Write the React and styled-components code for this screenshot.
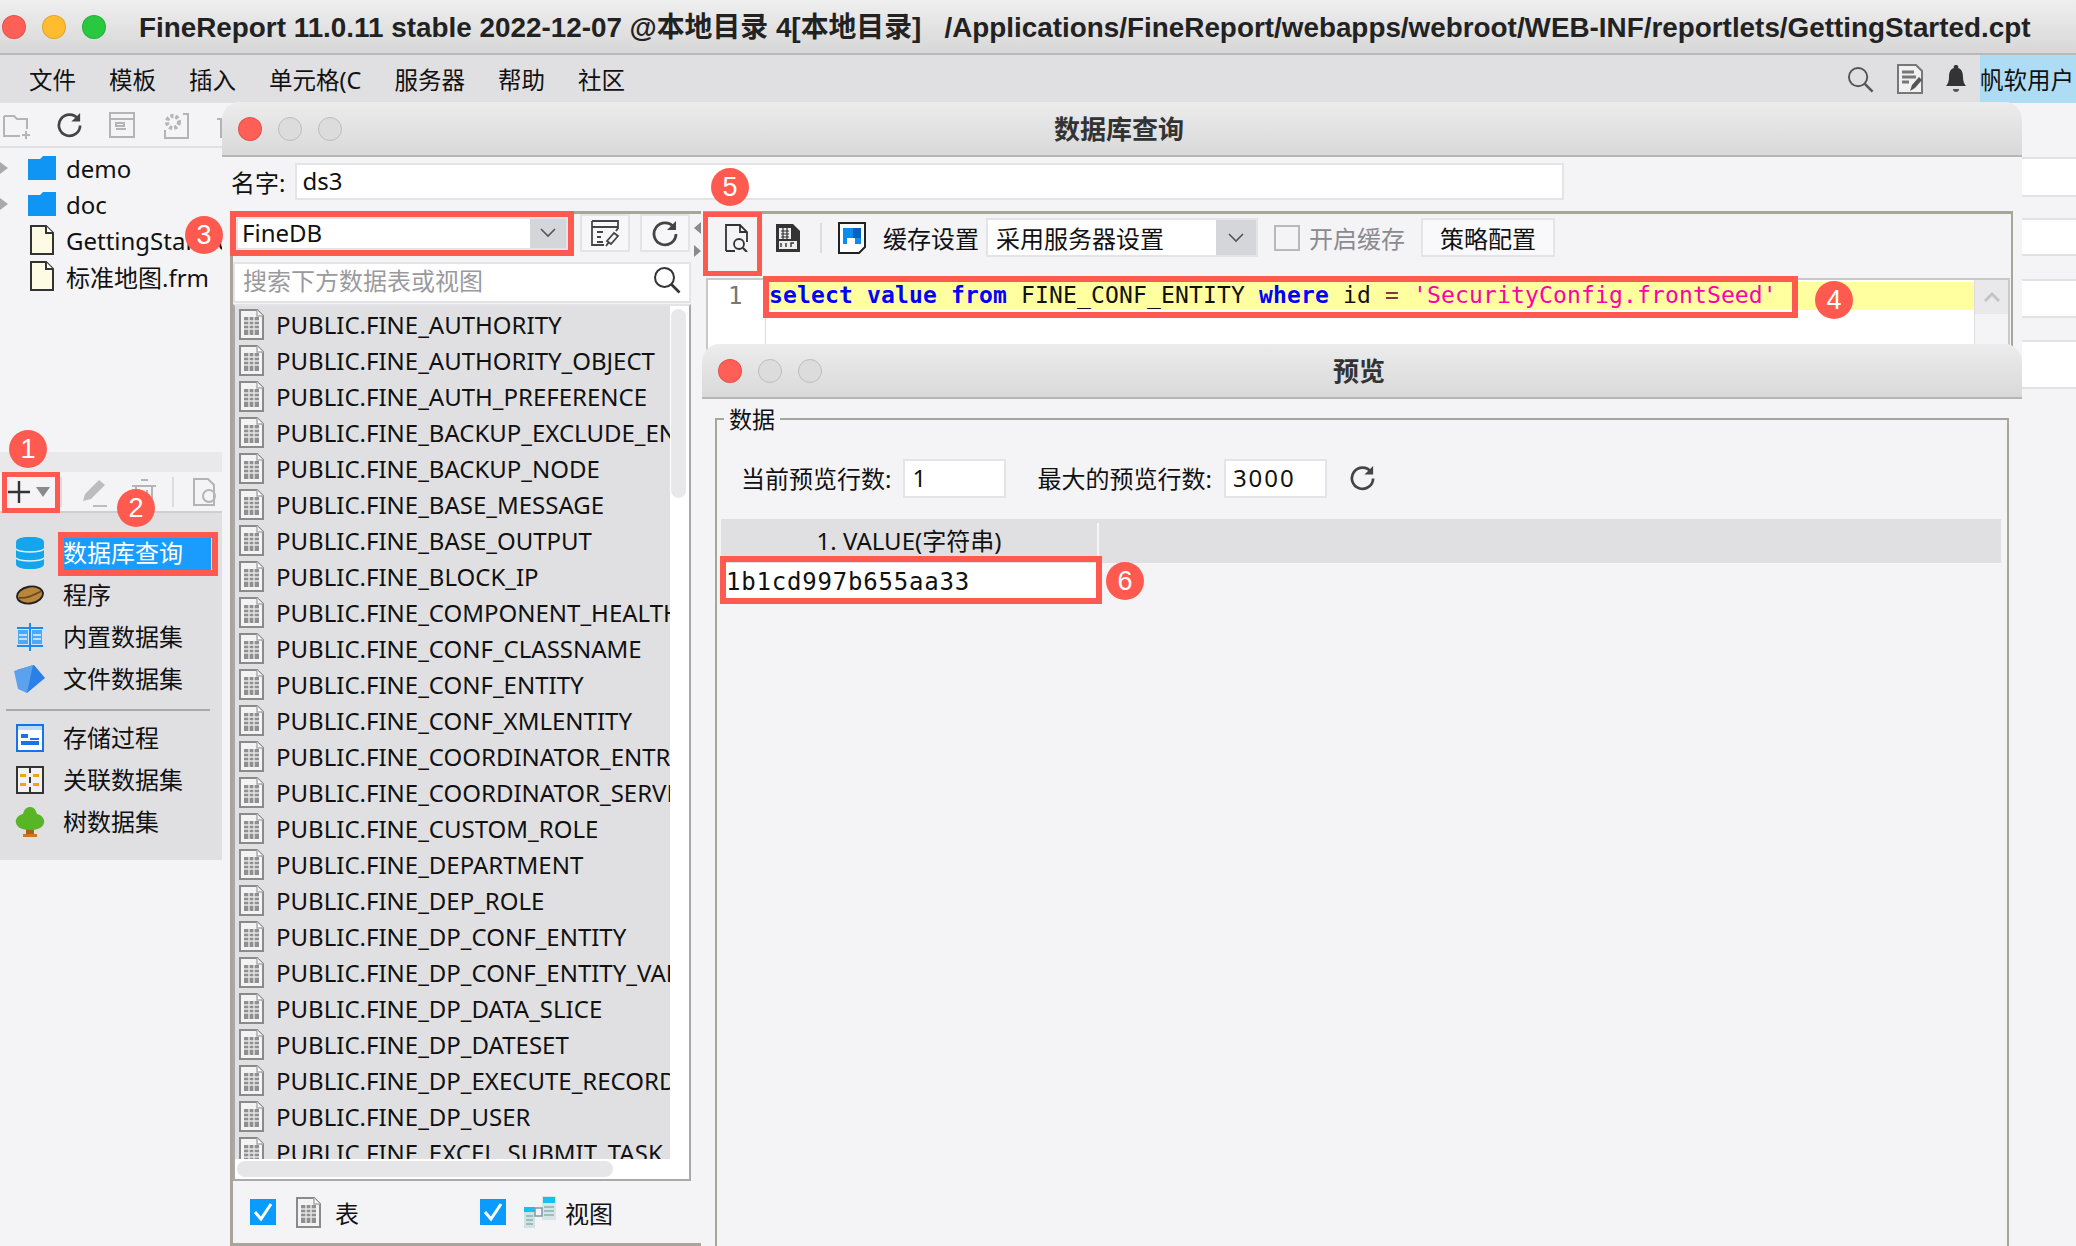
import React from 'react';
import styled, { createGlobalStyle } from 'styled-components';

const SANS = `"Noto Sans", "Noto Sans CJK SC", sans-serif`;
const MONO = `"DejaVu Sans Mono", "Noto Sans CJK SC", monospace`;
const RED = '#ff5a4f';

const Global = createGlobalStyle`
  html, body { margin: 0; padding: 0; background: #f4f4f6; }
  #root { width: 2076px; height: 1246px; overflow: hidden; }
  * { box-sizing: border-box; }
`;

const Screen = styled.div`
  position: relative;
  width: 2076px;
  height: 1246px;
  overflow: hidden;
  display: flex;
  flex-direction: column;
  background: #f4f4f6;
  font-family: ${SANS};
  font-size: 24px;
  color: #111;
`;

const AppTitle = styled.div`
  height: 55px;
  flex: none;
  display: flex;
  align-items: center;
  padding-left: 2px;
  background: linear-gradient(#efefef, #d7d7d7);
  border-bottom: 2px solid #b9b9b9;
`;

const Lights = styled.div`
  display: flex;
  gap: 16px;
  flex: none;
`;

const Light = styled.span`
  width: 24px;
  height: 24px;
  border-radius: 50%;
  background: ${p => p.$c};
  border: 1px solid ${p => p.$b || 'rgba(0,0,0,.12)'};
`;

const AppName = styled.div`
  margin: 0 0 3px 33px;
  font-family: "Liberation Sans", "Noto Sans CJK SC", sans-serif;
  font-weight: 700;
  font-size: 27.85px;
  white-space: pre;
  color: #222;
`;

const MenuBar = styled.div`
  height: 48px;
  flex: none;
  display: flex;
  align-items: center;
  padding-left: 29px;
  gap: 33px;
  background: #e0e0e3;
  font-size: 23.5px;
`;

const MenuRight = styled.div`
  margin-left: auto;
  height: 100%;
  display: flex;
  align-items: center;
  gap: 14px;
`;

const MenuIcons = styled.div`
  display: flex;
  align-items: center;
  gap: 22px;
`;

const UserTag = styled.div`
  height: 100%;
  width: 96px;
  background: #aedcf5;
  display: flex;
  align-items: center;
  white-space: nowrap;
`;

const Workspace = styled.div`
  flex: 1;
  display: flex;
  min-height: 0;
`;

const Sidebar = styled.div`
  width: 222px;
  flex: none;
  display: flex;
  flex-direction: column;
  background: #f4f4f6;
`;

const SideTools = styled.div`
  height: 45px;
  flex: none;
  display: flex;
  align-items: center;
  gap: 24px;
  padding-left: 2px;
  border-bottom: 2px solid #e0e0e3;
  overflow: hidden;
  svg { flex: none; }
`;

const Tree = styled.div`
  flex: 1;
  padding-top: 2px;
`;

const TreeRow = styled.div`
  position: relative;
  height: 36px;
  display: flex;
  align-items: center;
  gap: ${p => (p.$file ? 12 : 10)}px;
  padding-left: ${p => (p.$file ? 30 : 28)}px;
  white-space: nowrap;
  overflow: hidden;
  font-size: 24px;
  svg { flex: none; }
`;

const Expander = styled.span`
  position: absolute;
  left: 0;
  top: 12px;
  width: 0;
  height: 0;
  border-left: 8px solid #a9a9ad;
  border-top: 6px solid transparent;
  border-bottom: 6px solid transparent;
`;

const PanelGrip = styled.div`
  height: 20px;
  flex: none;
  background: #e9e9eb;
`;

const PanelTools = styled.div`
  height: 41px;
  flex: none;
  display: flex;
  align-items: center;
  padding-left: 8px;
  border-bottom: 2px solid #cfcfd2;
  svg { flex: none; }
`;

const ToolGap = styled.span`
  display: inline-flex;
  flex: none;
  margin-left: ${p => p.$l}px;
`;

const ToolSep = styled.span`
  width: 2px;
  height: 30px;
  flex: none;
  margin: 0 ${p => p.$r ?? 18}px 0 ${p => p.$l ?? 16}px;
  background: #dcdcdf;
`;

const DataTypes = styled.div`
  height: 347px;
  flex: none;
  padding-top: 19px;
  background: #e0e0e3;
`;

const DataType = styled.div`
  height: 42px;
  display: flex;
  align-items: center;
  padding-left: 16px;
  gap: 19px;
`;

const TypeIcon = styled.span`
  width: 28px;
  flex: none;
  display: flex;
  justify-content: center;
`;

const TypeLabel = styled.span`
  line-height: 34px;
  white-space: nowrap;
  ${p => p.$active && `
    width: 148px;
    color: #fff;
    background: #1a9cff;
  `}
`;

const TypeSep = styled.div`
  height: 2px;
  margin: 9px 12px 6px 6px;
  background: #a9a9ab;
`;

const SideBottom = styled.div`
  flex: none;
  height: 386px;
`;

const Strip = styled.div`
  flex: 1;
  display: flex;
  flex-direction: column;
  align-items: flex-end;
  padding-top: 54px;
`;

const StripRow = styled.div`
  width: 60px;
  height: ${p => p.$h}px;
  margin-bottom: ${p => p.$m}px;
  background: #fff;
  border-top: 2px solid #e2e2e6;
  border-bottom: 2px solid #e2e2e6;
`;

const Dialog = styled.div`
  position: absolute;
  left: ${p => p.$x}px;
  top: ${p => p.$y}px;
  width: ${p => p.$w}px;
  height: ${p => p.$h}px;
  display: flex;
  flex-direction: column;
  background: #f4f4f6;
  border-radius: 18px 18px 0 0;
  overflow: hidden;
`;

const DialogBar = styled.div`
  height: 55px;
  flex: none;
  display: grid;
  grid-template-columns: 1fr auto 1fr;
  align-items: center;
  padding: 0 22px 0 16px;
  background: linear-gradient(#ececec, #d9d9d9);
  border-bottom: 2px solid #b5b5b5;
`;

const DialogTitle = styled.div`
  margin-bottom: 2px;
  font-weight: 700;
  font-size: 26px;
  color: #333;
`;

const NameRow = styled.div`
  height: 37px;
  flex: none;
  margin-top: 6px;
  display: flex;
  align-items: center;
  padding-left: 9px;
  gap: 10px;
`;

const TextBox = styled.div`
  width: ${p => p.$w}px;
  height: ${p => p.$h || 37}px;
  flex: none;
  display: flex;
  align-items: center;
  padding: 0 0 2px ${p => p.$pl || 5}px;
  background: #fff;
  border: 2px solid #e4e4e8;
  letter-spacing: ${p => p.$sp || 0}px;
`;

const DialogBody = styled.div`
  flex: 1;
  display: flex;
  min-height: 0;
  margin: 11px 0 0 8px;
  gap: 2px;
`;

const SourcePane = styled.div`
  position: relative;
  width: 471px;
  flex: none;
  display: flex;
  flex-direction: column;
  padding: 0 10px 0 0;
  border: 3px solid #a8a69a;
  border-right: 0;
`;

const SourceRow = styled.div`
  height: 38px;
  flex: none;
  display: flex;
  align-items: center;
  padding-left: 3px;
`;

const Combo = styled.div`
  width: ${p => p.$w}px;
  height: ${p => p.$h || 33}px;
  flex: none;
  display: flex;
  background: #fff;
  border: 2px solid #e4e4e8;
`;

const ComboText = styled.div`
  flex: 1;
  padding: 0 0 1px ${p => p.$pl || 4}px;
  display: flex;
  align-items: center;
`;

const ComboArrow = styled.div`
  width: ${p => p.$w || 36}px;
  display: flex;
  align-items: center;
  justify-content: center;
  background: #d5d6da;
`;

const IconBtn = styled.div`
  width: 50px;
  height: 38px;
  flex: none;
  margin-left: ${p => p.$l}px;
  display: flex;
  align-items: center;
  justify-content: center;
  background: #f7f7f9;
  border: 2px solid #e4e4e8;
`;

const SearchBox = styled.div`
  height: 41px;
  flex: none;
  margin-top: 10px;
  display: flex;
  align-items: center;
  justify-content: space-between;
  padding: 0 8px 6px;
  background: #fff;
  border: 2px solid #e4e4e8;
  color: #9a9a9e;
`;

const TableList = styled.div`
  position: relative;
  height: 877px;
  flex: none;
  margin-top: 1px;
  display: flex;
  flex-direction: column;
  background: #fff;
  border: 2px solid #a9a9a9;
  border-top: 2px solid #e4e4e8;
`;

const ListViewport = styled.div`
  width: 435px;
  flex: 1;
  min-height: 0;
  overflow: hidden;
  background: #e0e0e3;
`;

const ListRow = styled.div`
  height: 36px;
  display: flex;
  align-items: center;
  gap: 12px;
  padding-left: 4px;
  white-space: nowrap;
  font-size: 24px;
`;

const VThumb = styled.div`
  position: absolute;
  right: 3px;
  top: 3px;
  width: 15px;
  height: 189px;
  border-radius: 8px;
  background: #e8e8ea;
`;

const HTrack = styled.div`
  height: 20px;
  flex: none;
  display: flex;
  align-items: center;
  padding-left: 2px;
  background: #fff;
`;

const HThumb = styled.div`
  width: 376px;
  height: 16px;
  border-radius: 8px;
  background: #e6e6e8;
`;

const FilterRow = styled.div`
  flex: 1;
  display: flex;
  align-items: center;
  padding-left: 17px;
`;

const Check = styled.span`
  width: 26px;
  height: 26px;
  flex: none;
  display: flex;
  align-items: center;
  justify-content: center;
  background: ${p => (p.$on ? '#0a9bff' : 'transparent')};
  border: ${p => (p.$on ? '0' : '2px solid #b9b9bd')};
`;

const FilterItem = styled.span`
  display: flex;
  flex: none;
  margin-left: ${p => p.$l}px;
`;

const Splitter = styled.span`
  position: absolute;
  right: 0;
  top: ${p => p.$t}px;
  width: 0;
  height: 0;
  border-top: 6px solid transparent;
  border-bottom: 6px solid transparent;
  ${p => (p.$left ? 'border-right: 7px solid #8b8b8b;' : 'border-left: 7px solid #8b8b8b;')}
`;

const SqlPane = styled.div`
  width: 1310px;
  flex: none;
  display: flex;
  flex-direction: column;
  border-top: 3px solid #a8a69a;
  border-right: 2px solid #a8a69a;
`;

const SqlTools = styled.div`
  height: 64px;
  flex: none;
  display: flex;
  align-items: flex-start;
  padding: 4px 0 0 22px;
`;

const ToolItem = styled.div`
  height: 39px;
  flex: none;
  display: flex;
  align-items: center;
  margin-left: ${p => p.$l || 0}px;
  color: ${p => p.$c || 'inherit'};
`;

const PlainBtn = styled.div`
  width: 134px;
  height: 39px;
  flex: none;
  margin-left: 16px;
  display: flex;
  align-items: center;
  justify-content: center;
  background: #f9f9fb;
  border: 2px solid #e4e4e8;
`;

const Editor = styled.div`
  flex: 1;
  display: flex;
  margin: 0 1px 0 3px;
  background: #fff;
  border: 2px solid #c9c9c9;
  font-family: ${MONO};
  font-size: 23px;
`;

const Gutter = styled.div`
  width: 58px;
  flex: none;
  padding: 2px 0 0 20px;
  color: #777;
  border-right: 1px solid #ddd;
  font-size: 24px;
`;

const CodeArea = styled.div`
  flex: 1;
  padding-top: 2px;
`;

const CodeLine = styled.div`
  height: 28px;
  line-height: 27px;
  padding-left: 3px;
  background: #ffff9f;
  white-space: pre;
  letter-spacing: 0.15px;
`;

const Kw = styled.b`color: #0000ff;`;
const Str = styled.span`color: #ff00a8;`;
const Op = styled.span`color: #7d3a3a;`;

const EditorScroll = styled.div`
  width: 34px;
  flex: none;
  background: #f4f4f6;
  border-left: 1px solid #ddd;
`;

const ScrollUp = styled.div`
  height: 34px;
  display: flex;
  align-items: center;
  justify-content: center;
  background: #e9e9eb;
`;

const DataGroup = styled.fieldset`
  flex: 1;
  margin: 4px 13px 0 13px;
  padding: 0 4px;
  min-width: 0;
  border: 2px solid #a8a69a;
  border-bottom: 0;
`;

const Legend = styled.legend`
  margin-left: 3px;
  padding: 0 5px;
  font-size: 23px;
  line-height: 32px;
`;

const PreviewRow = styled.div`
  height: 39px;
  margin-top: 24px;
  display: flex;
  align-items: center;
  padding-left: 20px;
`;

const RowLabel = styled.span`
  display: inline-flex;
  margin: 0 12px 3px ${p => p.$l || 0}px;
  white-space: nowrap;
`;

const GridHead = styled.div`
  height: 44px;
  margin: 21px 2px 0 0;
  display: flex;
  align-items: center;
  background: #e0e0e3;
`;

const HeadCell = styled.div`
  width: 378px;
  height: 36px;
  display: flex;
  align-items: center;
  justify-content: center;
  padding-bottom: 3px;
  border-right: 2px solid #f6f6f6;
`;

const GridCell = styled.div`
  width: 371px;
  height: 37px;
  margin-left: 5px;
  display: flex;
  align-items: center;
  background: #fff;
  font-family: ${MONO};
  font-size: 24px;
  letter-spacing: 0.8px;
`;

const RedBox = styled.div`
  position: absolute;
  left: ${p => p.$x}px;
  top: ${p => p.$y}px;
  width: ${p => p.$w}px;
  height: ${p => p.$h}px;
  border: ${p => p.$b || 5}px solid ${RED};
  pointer-events: none;
`;

const Badge = styled.div`
  position: absolute;
  left: ${p => p.$x - 19}px;
  top: ${p => p.$y - 19}px;
  width: 38px;
  height: 38px;
  border-radius: 50%;
  display: flex;
  align-items: center;
  justify-content: center;
  background: ${RED};
  color: #fff;
  font-family: "Liberation Sans", sans-serif;
  font-size: 27px;
`;

const Refresh = ({ s = 28, c = '#444' }) => (
  <svg width={s} height={s} viewBox="0 0 28 28" fill="none">
    <path d="M23 8.5A11 11 0 1 0 25 15" stroke={c} strokeWidth="2.8" />
    <path d="M25 2v9h-9z" fill={c} />
  </svg>
);

const SearchIcon = ({ s = 28, c = '#444' }) => (
  <svg width={s} height={s} viewBox="0 0 28 28" fill="none" stroke={c} strokeWidth="2">
    <circle cx="11.5" cy="11.5" r="9.5" />
    <path d="M18.5 18.5l8 8" strokeWidth="2.6" />
  </svg>
);

const NoteIcon = () => (
  <svg width="28" height="30" viewBox="0 0 28 30" fill="none">
    <path d="M2 1h18l6 6v22H2z" fill="#f1f1f2" stroke="#777" strokeWidth="2" />
    <path d="M6 8h12M6 13h14M6 18h7" stroke="#777" strokeWidth="3" />
    <path d="M14 27l2-6 7-8 3 3-7 8z" fill="#555" />
  </svg>
);

const BellIcon = () => (
  <svg width="20" height="28" viewBox="0 0 20 28">
    <path d="M10 0a2 2 0 0 1 2 3c4 1 5 5 5 9 0 4 1 7 3 9H0c2-2 3-5 3-9 0-4 1-8 5-9a2 2 0 0 1 2-3z" fill="#333" />
    <path d="M7 24h6a3 3 0 0 1-6 0z" fill="#555" />
  </svg>
);

const FolderIcon = () => (
  <svg width="28" height="24" viewBox="0 0 28 24">
    <path d="M0 3h12l3-3h13v24H0z" fill="#0f96f5" />
  </svg>
);

const FileIcon = () => (
  <svg width="24" height="30" viewBox="0 0 24 30">
    <path d="M1 1h15l7 7v21H1z" fill="#fdfbe3" stroke="#333" strokeWidth="2" />
    <path d="M16 1v7h7" fill="#fff" stroke="#333" strokeWidth="2" />
  </svg>
);

const TableIcon = () => (
  <svg width="25" height="31" viewBox="0 0 25 31" style={{ flex: 'none' }}>
    <path d="M1 1h17l6 6v23H1z" fill="#f3f3f3" stroke="#8a8a8a" strokeWidth="2" />
    <path d="M18 1v6h6" fill="#fff" stroke="#aaa" strokeWidth="1.5" />
    <path d="M5 8h15v18H5z" fill="#8f8f8f" />
    <path d="M5 12h15M5 16h15M5 20h15M10 8v18M15 8v18" stroke="#e6e6e6" strokeWidth="1.4" />
  </svg>
);

const ViewIcon = () => (
  <svg width="32" height="32" viewBox="0 0 32 32" style={{ flex: 'none' }}>
    <path d="M0 11h11v21H0z" fill="#cfe3e3" />
    <path d="M0 11h11v5H0z" fill="#13c2f0" />
    <path d="M18 0h14v24H18z" fill="#d5e6e6" />
    <path d="M19 1h12v6H19z" fill="#13c2f0" />
    <path d="M11 20h7v-8h-7z" fill="none" stroke="#7a9c9c" strokeWidth="1.5" />
    <path d="M2 20h7M2 24h7M2 28h7M20 11h10M20 15h10M20 19h10" stroke="#8fb0b0" strokeWidth="1.5" />
  </svg>
);

const Chevron = ({ c = '#555' }) => (
  <svg width="16" height="10" viewBox="0 0 16 10" fill="none">
    <path d="M1 1l7 7 7-7" stroke={c} strokeWidth="1.6" />
  </svg>
);

const Tick = () => (
  <svg width="20" height="20" viewBox="0 0 20 20" fill="none">
    <path d="M2 10l6 7L18 2" stroke="#fff" strokeWidth="3" />
  </svg>
);

const GrayDoc = ({ children }) => (
  <svg width="30" height="28" viewBox="0 0 30 28" fill="none" stroke="#b4b4b6" strokeWidth="2">
    {children}
  </svg>
);

const DbIcon = () => (
  <svg width="28" height="32" viewBox="0 0 28 32">
    <path d="M0 5c0-7 28-7 28 0v22c0 7-28 7-28 0z" fill="#14a5ec" />
    <path d="M0 12c4 4 24 4 28 0M0 21c4 4 24 4 28 0" stroke="#dff2fb" strokeWidth="1.6" fill="none" />
  </svg>
);

const BeanIcon = () => (
  <svg width="30" height="20" viewBox="0 0 30 20">
    <ellipse cx="15" cy="10" rx="14" ry="9" fill="#b9863c" stroke="#222" strokeWidth="2" transform="rotate(-10 15 10)" />
    <path d="M3 13c8 1 16-3 24-7" stroke="#6b4a1c" strokeWidth="2" fill="none" />
  </svg>
);

const SplitIcon = () => (
  <svg width="28" height="28" viewBox="0 0 28 28">
    <path d="M14 0v28M1 5h26M1 23h26" stroke="#1a8cf0" strokeWidth="2" />
    <rect x="2" y="7" width="10" height="14" fill="#4fa8f5" />
    <rect x="16" y="7" width="10" height="14" fill="#4fa8f5" />
    <path d="M3 12h8M3 16h8M17 12h8M17 16h8" stroke="#bfe0fb" strokeWidth="2" />
  </svg>
);

const CubeIcon = () => (
  <svg width="32" height="28" viewBox="0 0 32 28" style={{ flex: 'none' }}>
    <path d="M3 5L20 0l11 13-18 15z" fill="#2a7fe8" />
    <path d="M0 6l19-6-6 28-9-4z" fill="#5aa2ee" />
  </svg>
);

const ProcIcon = () => (
  <svg width="28" height="28" viewBox="0 0 28 28">
    <rect x="1" y="1" width="26" height="26" fill="#fff" stroke="#1a72e8" strokeWidth="2" />
    <rect x="2" y="2" width="24" height="4" fill="#b9dcf8" />
    <path d="M5 10h7v4H5zM5 17h18v4H5zM14 14h9v2h-9z" fill="#1a72e8" />
  </svg>
);

const JoinIcon = () => (
  <svg width="28" height="28" viewBox="0 0 28 28">
    <rect x="1" y="1" width="26" height="26" fill="#f2f2f2" stroke="#333" strokeWidth="2" />
    <path d="M14 1v6M14 11v6M14 21v6" stroke="#333" strokeWidth="2" />
    <path d="M4 8h6v3H4zM17 8h6v3h-6zM4 17h6v3H4zM17 17h6v3h-6z" fill="#f2a20c" />
  </svg>
);

const TreeIcon = () => (
  <svg width="30" height="30" viewBox="0 0 30 30" style={{ flex: 'none' }}>
    <path d="M11 20h8v7h-8z" fill="#a4631c" />
    <path d="M8 27h14v3H8z" fill="#c9782a" />
    <path d="M15 0c5 0 6 4 7 7 5 1 8 5 7 9s-5 7-14 7-13-3-14-7 2-8 7-9c1-3 2-7 7-7z" fill="#58b526" />
  </svg>
);

const SqlIcon = () => (
  <svg width="24" height="28" viewBox="0 0 24 28">
    <path d="M0 0h17l7 7v21H0z" fill="#333" />
    <path d="M3 4h12v11H3zM3 17h18v8H3z" fill="#eee" />
    <path d="M5 7h8M5 10h8M5 13h8M7 4v11M11 4v11" stroke="#333" strokeWidth="1.2" />
    <path d="M5 23v-4M10 23v-4M15 23v-4h3" stroke="#333" strokeWidth="1.4" fill="none" />
  </svg>
);

const SaveIcon = () => (
  <svg width="28" height="32" viewBox="0 0 28 32">
    <path d="M1 1h26v24l-6 6H1z" fill="#fff" stroke="#222" strokeWidth="2" />
    <path d="M5 6h18v16h-6v-6H9v6H5z" fill="#0b8cf0" />
    <path d="M15 6h8v10h-8z" fill="#0a5fc4" />
  </svg>
);

const TABLES = [
  'AUTHORITY', 'AUTHORITY_OBJECT', 'AUTH_PREFERENCE', 'BACKUP_EXCLUDE_ENTITY', 'BACKUP_NODE',
  'BASE_MESSAGE', 'BASE_OUTPUT', 'BLOCK_IP', 'COMPONENT_HEALTH', 'CONF_CLASSNAME', 'CONF_ENTITY',
  'CONF_XMLENTITY', 'COORDINATOR_ENTRY', 'COORDINATOR_SERVER', 'CUSTOM_ROLE', 'DEPARTMENT',
  'DEP_ROLE', 'DP_CONF_ENTITY', 'DP_CONF_ENTITY_VALUE', 'DP_DATA_SLICE', 'DP_DATESET',
  'DP_EXECUTE_RECORD', 'DP_USER', 'EXCEL_SUBMIT_TASK',
];

const TopTypes = [
  [<DbIcon key="a" />, '数据库查询', true],
  [<BeanIcon key="b" />, '程序'],
  [<SplitIcon key="c" />, '内置数据集'],
  [<CubeIcon key="d" />, '文件数据集'],
];

const BottomTypes = [
  [<ProcIcon key="a" />, '存储过程'],
  [<JoinIcon key="b" />, '关联数据集'],
  [<TreeIcon key="c" />, '树数据集'],
];

const TypeRow = ({ icon, label, active }) => (
  <DataType>
    <TypeIcon>{icon}</TypeIcon>
    <TypeLabel $active={active}>{label}</TypeLabel>
  </DataType>
);

const DialogLights = () => (
  <Lights>
    <Light $c="#ff5f57" />
    <Light $c="#dcdcdc" $b="#bdbdbd" />
    <Light $c="#dcdcdc" $b="#bdbdbd" />
  </Lights>
);

export default function App() {
  return (
    <Screen>
      <Global />
      <AppTitle>
        <Lights>
          <Light $c="#ff5f57" />
          <Light $c="#febc2e" />
          <Light $c="#28c840" />
        </Lights>
        <AppName>{'FineReport 11.0.11 stable 2022-12-07 @本地目录 4[本地目录]   /Applications/FineReport/webapps/webroot/WEB-INF/reportlets/GettingStarted.cpt'}</AppName>
      </AppTitle>
      <MenuBar>
        {['文件', '模板', '插入', '单元格(C', '服务器', '帮助', '社区'].map(m => <span key={m}>{m}</span>)}
        <MenuRight>
          <MenuIcons>
            <SearchIcon s={27} c="#555" />
            <NoteIcon />
            <BellIcon />
          </MenuIcons>
          <UserTag>帆软用户</UserTag>
        </MenuRight>
      </MenuBar>

      <Workspace>
        <Sidebar>
          <SideTools>
            <GrayDoc>
              <path d="M2 5h10l3 3h10v10M2 5v20h16M24 20v8M20 24h8" />
            </GrayDoc>
            <Refresh s={27} />
            <GrayDoc>
              <path d="M3 2h24v24H3zM3 8h24M9 12h8v3H9zM9 18h10" />
            </GrayDoc>
            <GrayDoc>
              <circle cx="12" cy="11" r="6" strokeDasharray="3 2" strokeWidth="4" />
              <path d="M22 3h5v24H4v-8" />
            </GrayDoc>
            <GrayDoc>
              <path d="M6 8h16v18H6zM2 8h24M11 3h7" />
            </GrayDoc>
          </SideTools>
          <Tree>
            <TreeRow><Expander /><FolderIcon />demo</TreeRow>
            <TreeRow><Expander /><FolderIcon />doc</TreeRow>
            <TreeRow $file><FileIcon />GettingStarted.cpt</TreeRow>
            <TreeRow $file><FileIcon />标准地图.frm</TreeRow>
          </Tree>
          <PanelGrip />
          <PanelTools>
            <svg width="22" height="22" viewBox="0 0 22 22">
              <path d="M11 0v22M0 11h22" stroke="#333" strokeWidth="2.4" />
            </svg>
            <ToolGap $l={5}>
              <svg width="16" height="10" viewBox="0 0 16 10">
                <path d="M1 0h14L8 10z" fill="#8a8a8a" />
              </svg>
            </ToolGap>
            <ToolSep $l={9} />
            <svg width="30" height="30" viewBox="0 0 30 30">
              <path d="M3 24l2-7L19 3l6 5-14 14z" fill="#bdbdbf" />
              <path d="M13 29h14" stroke="#bdbdbf" strokeWidth="2" />
            </svg>
            <ToolGap $l={20}>
              <GrayDoc>
                <path d="M6 8h16v19H6zM2 8h24M11 2h7M11 12v11M17 12v11" />
              </GrayDoc>
            </ToolGap>
            <ToolSep $l={12} $r={18} />
            <GrayDoc>
              <path d="M2 1h14l6 6v20H2z" />
              <circle cx="17" cy="18" r="6" />
            </GrayDoc>
          </PanelTools>
          <DataTypes>
            {TopTypes.map(([icon, label, active]) => <TypeRow key={label} icon={icon} label={label} active={active} />)}
            <TypeSep />
            {BottomTypes.map(([icon, label]) => <TypeRow key={label} icon={icon} label={label} />)}
          </DataTypes>
          <SideBottom />
        </Sidebar>
        <Strip>
          <StripRow $h={40} $m={21} />
          <StripRow $h={38} $m={23} />
          <StripRow $h={39} $m={22} />
          <StripRow $h={49} $m={0} />
        </Strip>
      </Workspace>

      <Dialog $x={222} $y={102} $w={1800} $h={1144}>
        <DialogBar>
          <DialogLights />
          <DialogTitle>数据库查询</DialogTitle>
        </DialogBar>
        <NameRow>
          <span>名字:</span>
          <TextBox $w={1269}>ds3</TextBox>
        </NameRow>
        <DialogBody>
          <SourcePane>
            <SourceRow>
              <Combo $w={332}>
                <ComboText>FineDB</ComboText>
                <ComboArrow $w={36}><Chevron /></ComboArrow>
              </Combo>
              <IconBtn $l={12}>
                <svg width="30" height="28" viewBox="0 0 30 28" fill="none" stroke="#444" strokeWidth="1.8">
                  <path d="M2 2h26v8M2 2v24h12M2 8h26M7 13h6M7 18h4M7 23h6" />
                  <path d="M17 22l7-8 4 3-7 8zM16 27l3-4M26 12l2-3" />
                </svg>
              </IconBtn>
              <IconBtn $l={10}><Refresh s={28} /></IconBtn>
            </SourceRow>
            <SearchBox>
              <span>搜索下方数据表或视图</span>
              <SearchIcon s={28} c="#333" />
            </SearchBox>
            <TableList>
              <ListViewport>
                {TABLES.map(t => (
                  <ListRow key={t}><TableIcon />PUBLIC.FINE_{t}</ListRow>
                ))}
              </ListViewport>
              <HTrack><HThumb /></HTrack>
              <VThumb />
            </TableList>
            <FilterRow>
              <Check $on><Tick /></Check>
              <FilterItem $l={20}><TableIcon /></FilterItem>
              <FilterItem $l={14}>表</FilterItem>
              <FilterItem $l={121}><Check $on><Tick /></Check></FilterItem>
              <FilterItem $l={18}><ViewIcon /></FilterItem>
              <FilterItem $l={9}>视图</FilterItem>
            </FilterRow>
            <Splitter $left $t={8} />
            <Splitter $t={31} />
          </SourcePane>
          <SqlPane>
            <SqlTools>
              <ToolItem>
                <svg width="23" height="28" viewBox="0 0 23 28" fill="none" stroke="#333" strokeWidth="1.8">
                  <path d="M1 27V1h14l7 7v10M1 27h9M15 1v7h7" />
                  <circle cx="14" cy="20" r="5" />
                  <path d="M18 24l4 4" strokeWidth="2.2" />
                </svg>
              </ToolItem>
              <ToolItem $l={28}><SqlIcon /></ToolItem>
              <ToolItem $l={20}><ToolSep $l={0} $r={0} /></ToolItem>
              <ToolItem $l={16}><SaveIcon /></ToolItem>
              <ToolItem $l={17}>缓存设置</ToolItem>
              <ToolItem $l={7}>
                <Combo $w={272} $h={39}>
                  <ComboText $pl={8}>采用服务器设置</ComboText>
                  <ComboArrow $w={40}><Chevron /></ComboArrow>
                </Combo>
              </ToolItem>
              <ToolItem $l={16}><Check /></ToolItem>
              <ToolItem $l={9} $c="#8b8b8f">开启缓存</ToolItem>
              <PlainBtn>策略配置</PlainBtn>
            </SqlTools>
            <Editor>
              <Gutter>1</Gutter>
              <CodeArea>
                <CodeLine>
                  <Kw>select</Kw> <Kw>value</Kw> <Kw>from</Kw> FINE_CONF_ENTITY <Kw>where</Kw> id <Op>=</Op> <Str>'SecurityConfig.frontSeed'</Str>
                </CodeLine>
              </CodeArea>
              <EditorScroll>
                <ScrollUp>
                  <svg width="18" height="12" viewBox="0 0 18 12" fill="none">
                    <path d="M2 10l7-7 7 7" stroke="#c4c4c4" strokeWidth="3" />
                  </svg>
                </ScrollUp>
              </EditorScroll>
            </Editor>
          </SqlPane>
        </DialogBody>
      </Dialog>

      <Dialog $x={702} $y={344} $w={1320} $h={902}>
        <DialogBar>
          <DialogLights />
          <DialogTitle>预览</DialogTitle>
        </DialogBar>
        <DataGroup>
          <Legend>数据</Legend>
          <PreviewRow>
            <RowLabel>当前预览行数:</RowLabel>
            <TextBox $w={103} $h={39} $sp={2} $pl={7}>1</TextBox>
            <RowLabel $l={31}>最大的预览行数:</RowLabel>
            <TextBox $w={103} $h={39} $sp={2} $pl={7}>3000</TextBox>
            <RowLabel $l={22}><Refresh s={27} /></RowLabel>
          </PreviewRow>
          <GridHead>
            <HeadCell>1. VALUE(字符串)</HeadCell>
          </GridHead>
          <GridCell>1b1cd997b655aa33</GridCell>
        </DataGroup>
      </Dialog>

      <RedBox $x={2} $y={472} $w={58} $h={41} />
      <RedBox $x={58} $y={532} $w={160} $h={44} $b={6} />
      <RedBox $x={230} $y={211} $w={344} $h={45} $b={6} />
      <RedBox $x={703} $y={212} $w={59} $h={64} />
      <RedBox $x={763} $y={276} $w={1035} $h={42} $b={6} />
      <RedBox $x={720} $y={556} $w={382} $h={48} $b={6} />
      <Badge $x={28} $y={449}>1</Badge>
      <Badge $x={136} $y={508}>2</Badge>
      <Badge $x={204} $y={235}>3</Badge>
      <Badge $x={1834} $y={300}>4</Badge>
      <Badge $x={730} $y={187}>5</Badge>
      <Badge $x={1125} $y={581}>6</Badge>
    </Screen>
  );
}
